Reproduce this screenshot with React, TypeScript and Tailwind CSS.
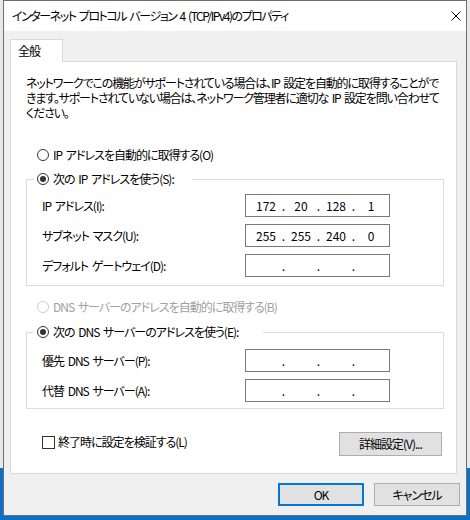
import React from 'react';

// Windows 10 style "Internet Protocol Version 4 (TCP/IPv4) Properties" dialog

const Radio = ({ checked, disabled }: { checked?: boolean; disabled?: boolean }) => (
  <span
    className={`flex h-[12px] w-[12px] shrink-0 items-center justify-center rounded-full border bg-white ${
      disabled ? 'border-[#cccccc]' : 'border-[#333333]'
    }`}
  >
    {checked && <span className="h-[6px] w-[6px] rounded-full bg-[#333333]" />}
  </span>
);

const IpField = ({ parts }: { parts: string[] }) => (
  <div className="flex h-[23px] w-[145px] shrink-0 items-center border border-[#7a7a7a] bg-white pl-[5px] tracking-normal">
    {parts.map((p, i) => (
      <React.Fragment key={i}>
        {i > 0 && <span className="w-[5px] text-center">.</span>}
        <span className="w-[30px] text-center">{p}</span>
      </React.Fragment>
    ))}
  </div>
);

const FieldRow = ({ label, parts }: { label: string; parts: string[] }) => (
  <div className="flex items-center">
    <span className="w-[218px] shrink-0 pl-[15px]">{label}</span>
    <IpField parts={parts} />
  </div>
);

const Legend = ({ text, width }: { text: string; width: string }) => (
  <div className={`-mt-[9px] ml-[7px] flex h-[16px] items-center gap-[4px] bg-white pl-[3px] ${width}`}>
    <Radio checked />
    <span>{text}</span>
  </div>
);

const App: React.FC = () => {
  const empty = ['', '', '', ''];

  return (
    <div className="h-[520px] w-[470px] overflow-hidden bg-[linear-gradient(to_bottom,#e9e9e9_0,#e9e9e9_468px,#0a72c6_468px)] pl-[3px] font-['Noto_Sans_CJK_JP',sans-serif] text-[12px] leading-[16px] tracking-[-1px] text-black [font-feature-settings:'palt'] [word-spacing:2px]">
      <div className="w-[464px] border border-[#6f6f6f] bg-[#f0f0f0]">
        {/* Title bar */}
        <div className="flex h-[30px] items-center justify-between bg-white pl-[8px] pr-[5px]">
          <span className="whitespace-nowrap tracking-[-1.45px]">
            インターネット プロトコル バージョン 4 (TCP/IPv4)のプロパティ
          </span>
          <svg width="10" height="10" viewBox="0 0 10 10" className="text-black">
            <path d="M0.5 0.5 L9.5 9.5 M9.5 0.5 L0.5 9.5" stroke="currentColor" strokeWidth="1" fill="none" />
          </svg>
        </div>

        {/* Body */}
        <div className="pb-[9px] pl-[6px] pt-[8px]">
          <div className="relative z-10 -mb-[1px] flex h-[23px] w-[53px] items-center border border-b-0 border-[#d9d9d9] bg-white pl-[7px]">
            全般
          </div>

          <div className="w-[447px] border border-[#d9d9d9] bg-white pb-[17px] pl-[15px] pr-[12px] pt-[13px]">
            <p className="whitespace-nowrap leading-[15px] tracking-[-1.15px]">
              ネットワークでこの機能がサポートされている場合は、IP 設定を自動的に取得することがで
              <br />
              きます。サポートされていない場合は、ネットワーク管理者に適切な IP 設定を問い合わせて
              <br />
              ください。
            </p>

            <div className="mt-[27px] flex h-[16px] items-center gap-[4px] pl-[11px]">
              <Radio />
              <span>IP アドレスを自動的に取得する(O)</span>
            </div>

            <div className="mt-[16px] border border-[#dcdcdc] pb-[8px]">
              <Legend text="次の IP アドレスを使う(S):" width="w-[158px]" />
              <div className="mt-[7px] flex flex-col gap-[7px]">
                <FieldRow label="IP アドレス(I):" parts={['172', '20', '128', '1']} />
                <FieldRow label="サブネット マスク(U):" parts={['255', '255', '240', '0']} />
                <FieldRow label="デフォルト ゲートウェイ(D):" parts={empty} />
              </div>
            </div>

            <div className="mt-[13px] flex h-[16px] items-center gap-[4px] pl-[11px] text-[#a0a0a0]">
              <Radio disabled />
              <span>DNS サーバーのアドレスを自動的に取得する(B)</span>
            </div>

            <div className="mt-[17px] border border-[#dcdcdc] pb-[6px]">
              <Legend text="次の DNS サーバーのアドレスを使う(E):" width="w-[229px]" />
              <div className="mt-[9px] flex flex-col gap-[7px]">
                <FieldRow label="優先 DNS サーバー(P):" parts={empty} />
                <FieldRow label="代替 DNS サーバー(A):" parts={empty} />
              </div>
            </div>

            <div className="mt-[23px] flex items-start justify-between pr-[2px]">
              <label className="mt-[2px] flex items-center gap-[3px] pl-[16px]">
                <span className="h-[13px] w-[13px] border border-[#333333] bg-white" />
                <span>終了時に設定を検証する(L)</span>
              </label>
              <button className="h-[24px] w-[103px] border border-[#adadad] bg-[#e1e1e1]">詳細設定(V)...</button>
            </div>
          </div>

          <div className="mt-[9px] flex justify-end gap-[10px] pr-[6px]">
            <button className="h-[23px] w-[86px] border-2 border-[#0078d7] bg-[#e1e1e1]">OK</button>
            <button className="h-[23px] w-[86px] border border-[#adadad] bg-[#e1e1e1]">キャンセル</button>
          </div>
        </div>
      </div>
    </div>
  );
};

export default App;
